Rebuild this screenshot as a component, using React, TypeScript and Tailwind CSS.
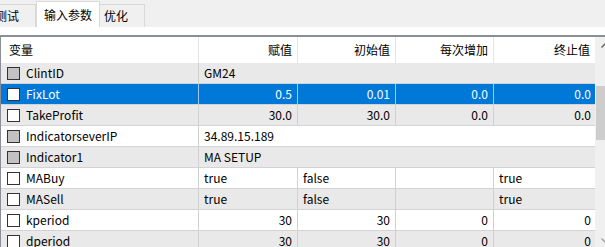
type Row = {
  name: string;
  kind: 'string' | 'value';
  check: 'grey' | 'white';
  text?: string;
  cells?: string[];
  align?: 'left' | 'right';
};

const rows: Row[] = [
  { name: 'ClintID', kind: 'string', check: 'grey', text: 'GM24' },
  { name: 'FixLot', kind: 'value', check: 'white', cells: ['0.5', '0.01', '0.0', '0.0'], align: 'right' },
  { name: 'TakeProfit', kind: 'value', check: 'white', cells: ['30.0', '30.0', '0.0', '0.0'], align: 'right' },
  { name: 'IndicatorseverIP', kind: 'string', check: 'grey', text: '34.89.15.189' },
  { name: 'Indicator1', kind: 'string', check: 'grey', text: 'MA SETUP' },
  { name: 'MABuy', kind: 'value', check: 'white', cells: ['true', 'false', '', 'true'], align: 'left' },
  { name: 'MASell', kind: 'value', check: 'white', cells: ['true', 'false', '', 'true'], align: 'left' },
  { name: 'kperiod', kind: 'value', check: 'white', cells: ['30', '30', '0', '0'], align: 'right' },
  { name: 'dperiod', kind: 'value', check: 'white', cells: ['30', '30', '0', '0'], align: 'right' },
];

const widths = ['w-[99px]', 'w-[98px]', 'w-[98px]', 'w-[102px]'];

function ParamRow({ row, index }: { row: Row; index: number }) {
  const selected = index === 1;
  const bg = selected ? 'bg-[#0078d7] text-white' : index % 2 === 0 ? 'bg-[#e9e9e9]' : 'bg-white';
  const sep = selected ? 'border-[#9fc9ef]' : 'border-[#d0d0d0]';

  return (
    <div className={`flex h-[21px] border-b border-[#d3d3d3] ${bg}`}>
      <div className={`flex w-[198px] shrink-0 items-center border-r ${sep}`}>
        <span
          className={`ml-[6px] h-[13px] w-[13px] border border-[#333] ${
            row.check === 'grey' ? 'bg-[#c2c2c2]' : 'bg-white'
          }`}
        />
        <span className="ml-[6px]">{row.name}</span>
      </div>
      {row.kind === 'string' ? (
        <div className="flex flex-1 items-center pl-[5px]">{row.text}</div>
      ) : (
        row.cells!.map((c, i) => (
          <div
            key={i}
            className={`flex shrink-0 items-center px-[5px] ${widths[i]} ${
              i < 3 ? `border-r ${sep}` : ''
            } ${row.align === 'right' ? 'justify-end' : 'justify-start'}`}
          >
            {c}
          </div>
        ))
      )}
    </div>
  );
}

export default function App() {
  return (
    <div
      className="relative h-[247px] w-[605px] overflow-hidden bg-white text-[12px] leading-none text-black"
      style={{ fontFamily: '"Noto Sans CJK SC", "Noto Sans", sans-serif' }}
    >
      {/* Tab strip */}
      <div className="flex h-[27px] items-end bg-[#f0f0f0]">
        <div className="-ml-[11px] flex h-[23px] w-[47px] shrink-0 items-center border border-b-0 border-[#d9d9d9] pl-[5px]">
          测试
        </div>
        <div className="flex h-[26px] w-[64px] shrink-0 items-center border border-b-0 border-[#d9d9d9] bg-white pl-[7px]">
          输入参数
        </div>
        <div className="flex h-[23px] w-[45px] shrink-0 items-center border border-b-0 border-l-0 border-[#d9d9d9] pl-[4px]">
          优化
        </div>
      </div>

      <div className="h-[8px] bg-white" />

      {/* List */}
      <div className="flex border-l border-t-2 border-[#8a8e95]">
        <div className="w-[594px] shrink-0">
          <div className="flex h-[26px] bg-white">
            <div className="flex w-[198px] shrink-0 items-center border-r border-[#e5e5e5] pl-[8px]">变量</div>
            <div className="flex w-[99px] shrink-0 items-center justify-end border-r border-[#e5e5e5] pr-[5px]">赋值</div>
            <div className="flex w-[98px] shrink-0 items-center justify-end border-r border-[#e5e5e5] pr-[5px]">初始值</div>
            <div className="flex w-[98px] shrink-0 items-center justify-end border-r border-[#e5e5e5] pr-[5px]">每次增加</div>
            <div className="flex w-[101px] shrink-0 items-center justify-end pr-[5px]">终止值</div>
          </div>
          {rows.map((r, i) => (
            <ParamRow key={r.name} row={r} index={i} />
          ))}
        </div>

        {/* Scrollbar */}
        <div className="flex w-[17px] shrink-0 flex-col bg-[#f0f0f0]">
          <div className="flex h-[17px] items-center pl-[6px] text-[#606060]">
            <svg width="8" height="5" viewBox="0 0 8 5">
              <path d="M0.5 4.5 L4 1 L7.5 4.5" fill="none" stroke="currentColor" strokeWidth="1.3" />
            </svg>
          </div>
          <div className="mt-[32px] ml-[1px] h-[54px] w-[15px] bg-[#cdcdcd]" />
          <div className="mt-[92px] flex h-[17px] items-center pl-[6px] text-[#a0a0a0]">
            <svg width="8" height="5" viewBox="0 0 8 5">
              <path d="M0.5 0.5 L4 4 L7.5 0.5" fill="none" stroke="currentColor" strokeWidth="1.3" />
            </svg>
          </div>
        </div>
      </div>
    </div>
  );
}
